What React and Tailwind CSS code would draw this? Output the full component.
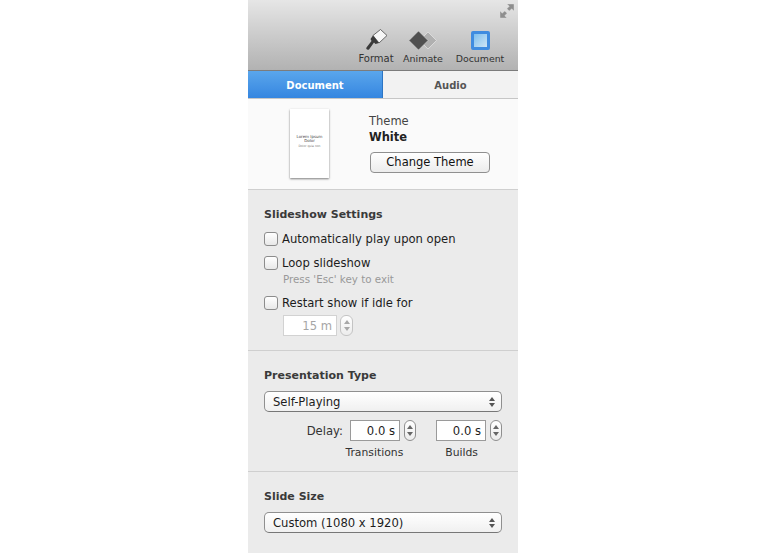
import React from 'react'

const Stepper = ({ disabled }) => (
  <div className={`h-[21px] rounded-[6px] border flex flex-col items-center justify-center gap-[3px] bg-gradient-to-b from-white to-[#ececec] ${disabled ? 'w-[13px] border-[#c4c4c4]' : 'w-[12px] border-[#8f8f8f]'}`}>
    <svg width="6" height="4" viewBox="0 0 6 4"><path d="M3 0L6 4H0z" fill={disabled ? '#a8a8a8' : '#666'} /></svg>
    <svg width="6" height="4" viewBox="0 0 6 4"><path d="M0 0h6L3 4z" fill={disabled ? '#a8a8a8' : '#666'} /></svg>
  </div>
)

const Check = ({ label }) => (
  <div className="flex items-center gap-[4px] h-[16px]">
    <div className="w-[14px] h-[14px] rounded-[3px] border border-[#8c8c8c] bg-gradient-to-b from-white to-[#e8e8e8]"></div>
    <span className="text-[11.6px] leading-[16px] text-[#1c1c1c]">{label}</span>
  </div>
)

const Select = ({ label }) => (
  <div className="h-[21px] rounded-[5px] border border-[#8f8f8f] border-b-[#777] bg-gradient-to-b from-white to-[#f0f0f0] flex items-center justify-between pl-[8px] pr-[6px]">
    <span className="text-[11.6px] pt-[2px] text-[#1c1c1c]">{label}</span>
    <div className="flex flex-col gap-[2px]">
      <svg width="6" height="4" viewBox="0 0 6 4"><path d="M3 0L6 4H0z" fill="#555" /></svg>
      <svg width="6" height="4" viewBox="0 0 6 4"><path d="M0 0h6L3 4z" fill="#555" /></svg>
    </div>
  </div>
)

const NumberField = ({ value }) => (
  <div className="w-[50px] h-[21px] border border-[#9a9a9a] bg-white text-right pr-[4px] text-[11.6px] leading-[21px] text-[#1c1c1c]">{value}</div>
)

const ToolButton = ({ label, icon, w, size }) => (
  <div className={`${w} flex flex-col items-center`}>
    <div className="h-[24px] flex items-center justify-center">{icon}</div>
    <span className={`${size} leading-[13px] text-[#333]`}>{label}</span>
  </div>
)

export default function App() {
  return (
    <div className="w-[767px] h-[553px] bg-white overflow-hidden font-['DejaVu_Sans',sans-serif]">
      <div className="ml-[248px] w-[270px] h-[553px] bg-[#ebebeb] flex flex-col">
        {/* toolbar */}
        <div className="h-[71px] shrink-0 border-b border-[#7c7c7c] bg-gradient-to-b from-[#e6e6e6] to-[#b2b2b2] flex flex-col">
          <div className="flex justify-end pr-[4px] pt-[4px] h-[28px]">
            <svg width="14" height="14" viewBox="0 0 14 14">
              <g fill="#8e8e8e" stroke="#dedede" strokeWidth="0.4">
                <path d="M14 0v7l-2.300-2.300-2.400 2.400-2.400-2.400 2.400-2.400L7 0z" />
                <path d="M0 14V7l2.300 2.300 2.400-2.400 2.400 2.400-2.400 2.400L7 14z" />
              </g>
            </svg>
          </div>
          <div className="flex justify-end pr-[11px]">
            <ToolButton label="Format" w="w-[38px]" size="text-[10px]" icon={
              <svg width="23" height="22" viewBox="0 0 23 22">
                <path d="M8 6.500L15.500 0.500 22 6.500 14 14z" fill="#f6f6f6" stroke="#4a4a4a" strokeWidth="0.8" />
                <path d="M8 6.500L14 14 10.500 15 9 13.500 4 20.500C2.500 21.500 0.500 20 1.500 18.500L6.500 12 5.500 10z" fill="#3a3a3a" />
              </svg>
            } />
            <div className="w-[6px]"></div>
            <ToolButton label="Animate" w="w-[44px]" size="text-[9.500px]" icon={
              <svg width="28" height="19" viewBox="0 0 28 19">
                <path d="M19 1l8.500 8.500-8.500 8.500-8.500-8.500z" fill="#b0b0b0" stroke="#e2e2e2" strokeWidth="0.8" />
                <path d="M9.500 0l9.500 9.500-9.500 9.500-9.500-9.500z" fill="#505050" stroke="#e2e2e2" strokeWidth="0.5" />
              </svg>
            } />
            <div className="w-[8px]"></div>
            <ToolButton label="Document" w="w-[54px]" size="text-[9.400px]" icon={
              <div className="w-[19px] h-[19px] rounded-[2px] border-[3px] border-[#3f8ce0] bg-gradient-to-br from-[#7cbfee] to-[#cfe5f4]"></div>
            } />
          </div>
        </div>

        {/* tabs */}
        <div className="h-[28px] shrink-0 flex border-b border-[#c6c6c6] text-[10px] font-bold">
          <div className="w-[135px] pt-[2px] flex items-center justify-center text-white border-r border-[#2c75c4] bg-gradient-to-b from-[#5aa6ec] to-[#3586e0]">Document</div>
          <div className="flex-1 pt-[2px] flex items-center justify-center text-[#555] bg-[#f2f2f2]">Audio</div>
        </div>

        {/* theme */}
        <div className="h-[91px] shrink-0 bg-[#fafafa] border-b border-[#cfcfcf] flex pl-[42px] pt-[10px]">
          <div className="w-[39px] h-[69px] bg-white shadow-[0_1px_2px_rgba(0,0,0,0.5)] flex flex-col items-center justify-center pb-[4px] text-[#444]">
            <span className="text-[4px] leading-[4.500px]">Lorem Ipsum</span>
            <span className="text-[4px] leading-[4.500px]">Dolor</span>
            <span className="text-[3px] leading-[4.500px] text-[#777]">Dolor quia non</span>
          </div>
          <div className="ml-[40px] flex flex-col">
            <span className="text-[11.500px] leading-[15px] mt-[5px] text-[#444]">Theme</span>
            <span className="text-[11.500px] leading-[16px] font-bold text-[#222]">White</span>
            <div className="mt-[7px] ml-[1px] w-[120px] h-[21px] rounded-[4px] border border-[#8f8f8f] bg-gradient-to-b from-white to-[#ececec] flex items-center justify-center text-[11.500px] text-[#111]">Change Theme</div>
          </div>
        </div>

        {/* slideshow settings */}
        <div className="h-[161px] shrink-0 border-b border-[#cfcfcf] pl-[16px] pt-[18px] flex flex-col">
          <div className="text-[11px] leading-[14px] font-bold text-[#3a3a3a]">Slideshow Settings</div>
          <div className="mt-[9px]"><Check label="Automatically play upon open" /></div>
          <div className="mt-[8px]"><Check label="Loop slideshow" /></div>
          <div className="ml-[19px] mt-[1px] text-[10.300px] leading-[14px] text-[#999]">Press 'Esc' key to exit</div>
          <div className="mt-[9px]"><Check label="Restart show if idle for" /></div>
          <div className="ml-[19px] mt-[4px] flex items-center gap-[3px]">
            <div className="w-[54px] h-[21px] border border-[#d2d2d2] bg-white text-right pr-[4px] text-[11.6px] leading-[20px] text-[#a5a5a5]">15 m</div>
            <Stepper disabled />
          </div>
        </div>

        {/* presentation type */}
        <div className="h-[121px] shrink-0 border-b border-[#cfcfcf] px-[16px] pt-[18px] flex flex-col">
          <div className="text-[11px] leading-[14px] font-bold text-[#3a3a3a]">Presentation Type</div>
          <div className="mt-[8px]"><Select label="Self-Playing" /></div>
          <div className="mt-[8px] flex items-center justify-end">
            <span className="text-[11.6px] pt-[2px] text-[#333] mr-[7px]">Delay:</span>
            <NumberField value="0.0 s" />
            <div className="w-[4px]"></div>
            <Stepper />
            <div className="w-[20px]"></div>
            <NumberField value="0.0 s" />
            <div className="w-[4px]"></div>
            <Stepper />
          </div>
          <div className="h-[14px] mt-[5px] text-[10.800px] leading-[14px] text-[#333] flex justify-end">
            <span className="mr-[42px]">Transitions</span>
            <span className="mr-[24px]">Builds</span>
          </div>
        </div>

        {/* slide size */}
        <div className="flex-1 px-[16px] pt-[18px] flex flex-col">
          <div className="text-[11px] leading-[14px] font-bold text-[#3a3a3a]">Slide Size</div>
          <div className="mt-[8px]"><Select label="Custom (1080 x 1920)" /></div>
        </div>
      </div>
    </div>
  )
}
